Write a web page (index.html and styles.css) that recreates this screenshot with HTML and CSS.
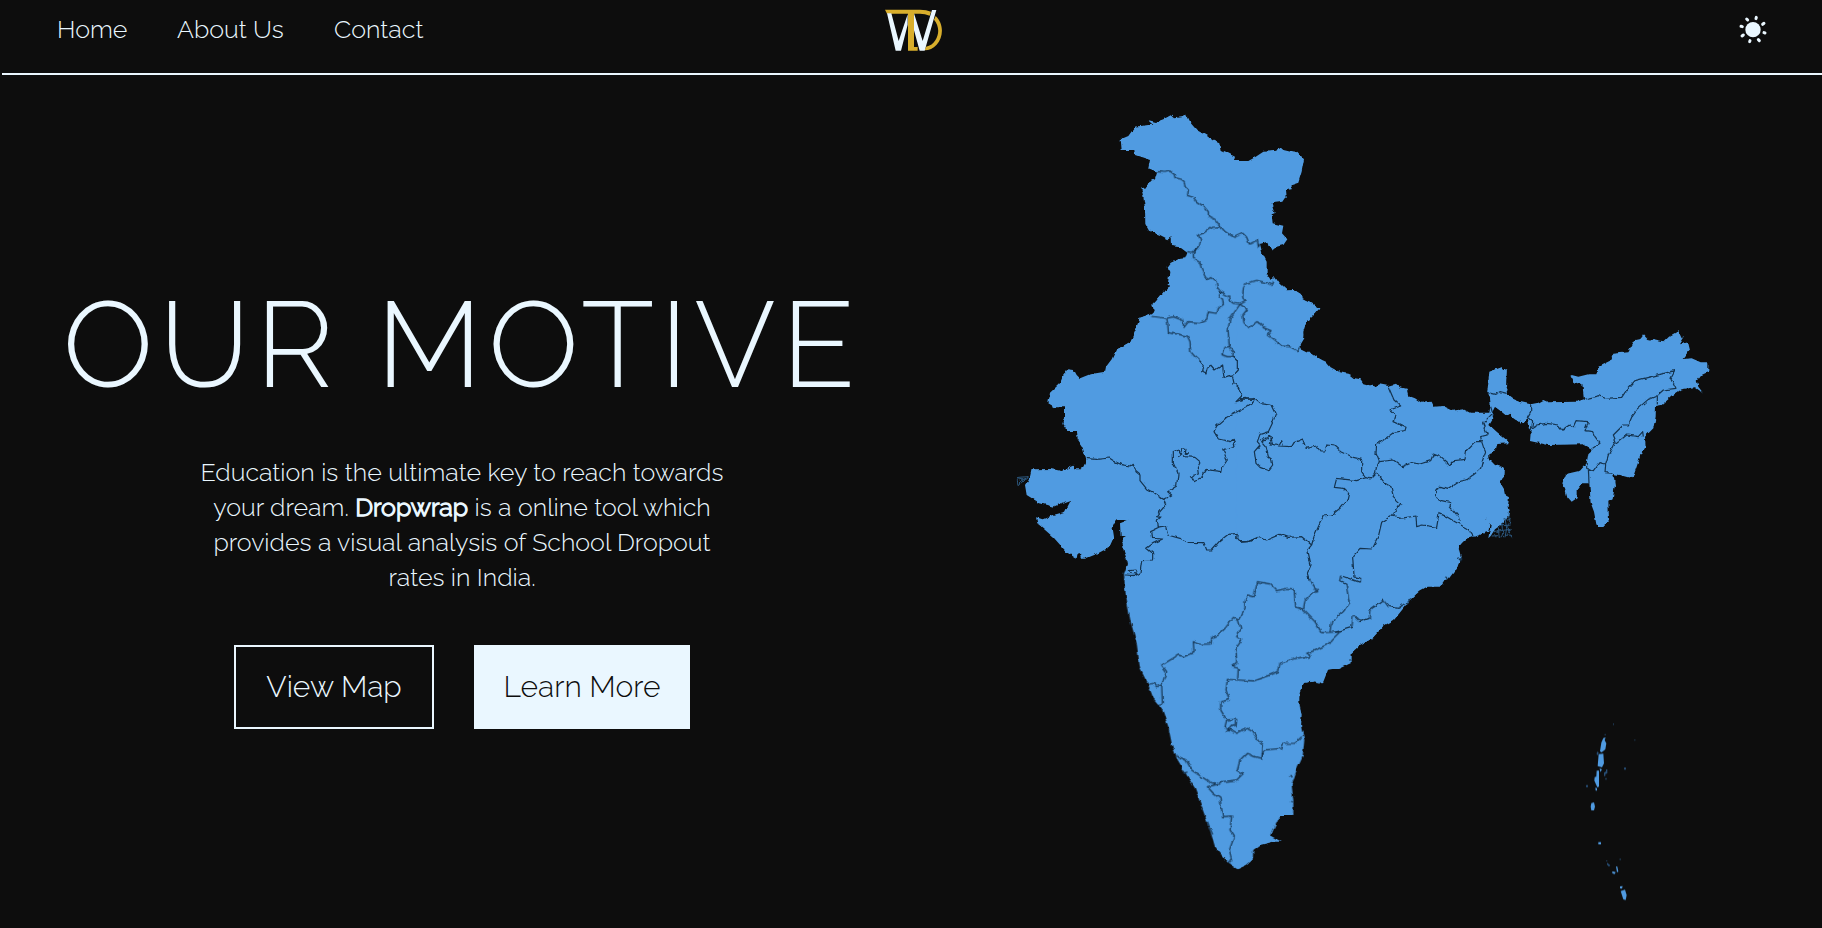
FILE: index.html
```html
<!DOCTYPE html>
<html lang="en">
<head>
<meta charset="utf-8">
<title>Dropwrap</title>
<link rel="stylesheet" href="styles.css">
</head>
<body>
<header class="header">
  <nav class="nav">
    <a class="nav-home">Home</a>
    <a class="nav-about">About Us</a>
    <a class="nav-contact">Contact</a>
  </nav>
  <svg class="logo" viewBox="75 28 174 128" aria-label="Dropwrap logo">
    <path d="M75 30H180Q200 30 213 36L209 48Q195 42 180 42H81Z" fill="#d8ae2c"/>
    <path d="M144 38H162V142H173V153H144Z" fill="#d8ae2c"/>
    <path d="M227 49C252 72 251 112 230 135C219 147 208 152 194 152L198 141C211 139 220 132 226 122C239 101 237 78 222 60Z" fill="#d8ae2c"/>
    <path d="M81 41H94L116 124L143 44V75L123 153H107Z" fill="#eaf7ff"/>
    <path d="M162 41L188 124L216 31H229L194 153H179L162 92Z" fill="#eaf7ff"/>
  </svg>
  <svg class="sun" viewBox="87 46 84 88" aria-label="Toggle theme">
    <circle cx="129" cy="90" r="23"/>
    <g stroke-width="9" stroke-linecap="round">
      <path d="M138 57l1-4M158 74l4-3M162 99l3 1M145 120l3 3M119 126l1-3M96 109l4-3M93 80l4 1M110 58l3 3"/>
    </g>
  </svg>
</header>
<main class="hero">
  <section class="intro">
    <h1 class="title">OUR MOTIVE</h1>
    <p class="text">
      <span class="line line-1">Education is the ultimate key to reach towards</span>
      <span class="line line-2">your dream. <b>Dropwrap</b> is a online tool which</span>
      <span class="line line-3">provides a visual analysis of School Dropout</span>
      <span class="line line-4">rates in India.</span>
    </p>
    <div class="actions">
      <a class="button button-outline">View Map</a>
      <a class="button button-solid">Learn More</a>
    </div>
  </section>
  <svg class="map" viewBox="1000 100 740 820" aria-label="Map of India">
    <defs>
      <filter id="coast" x="1000" y="100" width="740" height="820" filterUnits="userSpaceOnUse" color-interpolation-filters="sRGB">
        <feTurbulence type="fractalNoise" baseFrequency="0.16" numOctaves="2" seed="4" result="n"/>
        <feDisplacementMap in="SourceGraphic" in2="n" scale="4" xChannelSelector="R" yChannelSelector="G"/>
      </filter>
    </defs>
    <g filter="url(#coast)">
      <g class="land">
        <path transform="translate(1100 100) scale(.33333)" d="M38 780L48 750 90 726 105 700 115 675 120 654 157 640 162 630 157 615 185 585 205 562 213 557 203 555 208 520 203 500 212 488 235 478 256 475 262 458 240 442 213 438 212 412 205 418 180 405 147 392 136 372 135 325 130 290 124 265 140 262 145 248 165 238 172 215 145 205 150 180 125 172 105 165 103 150 65 150 62 118 85 108 105 80 145 75 160 75 143 60 168 66 190 58 212 46 222 55 245 52 258 46 266 62 290 90 320 107 340 122 358 130 362 150 385 160 405 170 402 183 445 183 465 172 490 155 532 152 540 141 550 150 585 158 592 155 612 178 605 215 595 248 575 255 575 268 558 270 560 290 550 305 515 310 524 340 515 343 518 370 550 377 546 400 562 418 550 435 530 440 518 450 505 440 502 425 480 432 487 460 500 485 500 520 512 540 525 528 540 550 560 568 580 567 605 585 608 598 635 612 658 626 640 642 618 670 608 690 610 708 600 725 598 745 625 758 632 758 665 780Z"/>
        <path transform="translate(1000 290) scale(.33333)" d="M495 0L460 45 462 68 420 83 408 115 390 157 348 180 335 208 318 230 315 245 270 253 240 265 230 255 222 240 205 238 188 260 180 280 150 308 145 340 165 352 192 352 192 385 187 402 202 423 228 423 230 448 245 470 255 505 255 520 250 530 240 538 222 538 222 527 185 543 155 537 95 538 90 560 75 585 80 615 120 640 160 650 185 640 213 630 195 665 160 675 128 688 108 682 112 700 160 742 200 787 230 806 232 790 240 790 243 806 255 806 290 792 328 772 342 740 338 715 350 690 385 690 360 700 362 738 378 738 366 745 372 785 385 815 382 845 372 870 800 880 800 0Z"/>
        <path transform="translate(1240 290) scale(.33333)" d="M-10 0L162 0 188 15 186 30 215 40 238 55 222 75 198 98 190 125 190 145 178 165 180 178 205 190 235 205 258 215 272 232 300 247 330 253 345 265 362 268 370 280 408 290 418 283 445 288 468 281 480 292 500 296 505 317 525 325 545 338 575 335 582 350 610 348 640 362 670 358 690 368 748 368 752 345 750 325 743 305 750 265 752 245 785 233 800 240 797 285 803 300 800 312 820 327 840 335 840 398 815 380 812 370 800 375 765 350 755 370 760 385 748 405 770 425 800 450 808 460 772 462 768 480 745 490 745 505 765 525 792 533 790 560 780 580 792 600 795 615 807 622 803 650 808 670 790 700 765 718 752 738 745 745 752 705 735 682 745 700 742 718 720 735 680 745 660 765 658 790 665 808 655 820 650 838 620 860 600 890 -10 890Z"/>
        <path transform="translate(1480 310) scale(.33333)" d="M30 250L22 245 28 185 65 172 80 182 78 230 82 250 90 265 118 275 152 283 175 278 190 270 205 277 290 275 312 268 307 222 280 217 275 195 295 200 325 193 352 193 355 170 390 152 400 128 445 124 465 90 482 86 492 73 505 87 550 97 570 77 595 63 605 85 615 78 600 103 625 97 630 118 608 147 635 145 662 157 685 157 685 185 665 195 650 215 655 230 670 250 645 232 605 238 580 255 545 285 528 288 527 320 520 355 495 380 497 410 480 440 470 470 458 505 430 497 400 492 405 525 398 568 385 575 387 630 370 648 350 648 342 605 332 578 328 520 305 520 290 540 290 565 275 575 262 560 255 535 247 520 258 492 300 482 320 460 325 430 338 418 310 403 205 405 150 393 152 370 142 322 132 338 100 320 85 308 80 318 48 292 35 290Z"/>
        <path transform="translate(1100 540) scale(.33333)" d="M65 0L85 75 72 100 75 150 92 245 110 310 120 385 145 435 160 475 185 505 205 560 215 610 230 655 260 705 285 745 305 800 330 870 345 920 385 970 412 988 440 975 458 960 460 930 480 915 520 905 545 905 513 888 520 870 540 828 580 828 580 780 575 735 590 690 608 650 613 600 603 560 602 510 595 480 600 450 615 428 650 424 658 432 680 390 710 385 710 0Z"/>
        <path transform="translate(1270 520) scale(.33333)" d="M0 0L660 0 655 35 610 50 580 60 567 80 575 110 560 145 535 178 480 195 450 212 420 240 372 300 340 318 310 352 270 375 245 398 245 428 205 447 175 447 160 485 140 490 135 482 105 488 88 520 88 560 95 580 92 630 0 630Z"/>
      </g>
      <g class="borders">
        <path transform="translate(1100 100) scale(.33333)" d="M172 215L195 217 210 213 222 222 225 233 245 238 253 245 255 260 265 270 263 285 280 292 290 305 312 320 325 335 325 348 345 358 362 380 375 395 402 412 428 400 440 412 448 432 472 420 475 440 480 432M362 380L335 382 312 398 295 405 302 420 298 440 275 457 262 455M298 440L280 460 280 475 300 488 305 510 320 538 332 530 348 542 352 562 362 575 385 588 388 600 400 610 420 613 435 605 428 590 430 565 438 550 470 541 500 548 515 556 518 545M362 575L358 588 368 598 370 614 352 625 348 640 325 636 320 658 298 668 265 665 252 682 247 660 220 650 200 655 157 649M200 655L203 670 205 698 230 702 262 708 270 725 272 755 285 770 297 780M420 613L390 655 384 690 388 740 372 742 366 764 382 770 398 770 400 755 390 740M420 613L442 628 428 645 432 668 448 684 470 665 485 672 490 683 513 692 502 705 520 718 545 738 570 740 592 752 598 742"/>
        <path transform="translate(1000 290) scale(.33333)" d="M255 505L290 508 328 504 345 515 362 523 390 528 400 520 408 545 420 555 420 572 440 597 465 610 490 628 515 615 503 605 530 588 534 550 520 520 520 485 535 480 545 492 535 500M545 485L545 476 558 478 556 488 565 488 550 495 555 500 585 502 600 515 592 530 595 552 580 556 570 565 585 572 605 562 620 538 640 542 665 545 668 530 682 510 668 480 705 468 700 448 690 455 655 447 642 425 650 408 680 382 740 350 765 332M490 628L497 645 480 665 470 680 482 682 472 690 475 714 497 710 503 735 540 745 565 757 612 758 620 780 635 780 660 752 685 733 712 730 710 745 720 757 745 755 780 740M475 714L452 725 455 745 488 747 460 760 440 775 458 790 458 810 425 812 420 850 405 857 375 855M388 842L405 840 410 852 395 850ZM597 210L610 225 605 245 618 252 622 235 632 225 645 240 668 225 672 265 697 257 712 240 712 210 700 198M697 257L702 280 715 292 725 318 708 335 735 325 765 330"/>
        <path transform="translate(1240 290) scale(.33333)" d="M0 325L20 328 45 325 60 338 95 343 108 370 97 400 85 425 60 433 52 455 60 465 43 485 48 520 60 532 85 542 98 525 95 508 85 500 78 470 65 455 80 448 90 435 98 445 88 460 115 468 155 470 162 458 188 447 198 475 230 468 240 483 255 483 262 465 285 468 305 485 340 502 365 508 365 545 378 563 390 567 405 552 410 530 418 515 408 490 410 465 460 428 495 422 498 412 462 395 468 375 450 360 482 348 462 330 445 290M60 450L95 438M90 440L98 463M118 466L125 452 130 466M418 515L460 510 488 530 515 518 540 522 572 512 580 492 600 500 628 525 640 512 675 508 680 480 705 455 725 455 730 470 737 487 728 510 722 535 708 548 680 570 655 575 620 598 602 592 587 600 587 620 605 632 632 638 630 650 655 680 658 692M725 455L722 440 742 435 728 400 758 370 752 350M743 308L765 313 780 305 800 310M410 548L435 580 453 590 460 620 482 640 458 675 425 697 415 740 397 777 360 775 338 800 342 860M458 675L480 685 528 678 530 710 548 705 590 712 597 670 620 680 645 695 685 718 700 740M378 563L350 572 290 565 283 592 310 595 326 610 322 628 300 655 275 675 250 678 235 710 222 740 215 765M0 755L25 755 55 742 80 750 120 733 145 742 185 740 215 765 203 780 213 825 202 850 208 870"/>
        <path transform="translate(1480 310) scale(.33333)" d="M152 283L152 305 142 322 158 335 152 370M155 355L170 345 200 340 235 345 248 360 268 345 280 350 288 332 325 335 315 362 338 365 345 380 360 400 338 415M312 268L360 257 375 265 425 262 440 240 465 212 585 182 573 205 588 235 550 240 530 258 505 268 470 298 458 315 445 345 430 345 400 375 410 400 440 375 475 380 488 365 490 380M405 395L385 435 377 462 375 488 402 490M377 462L360 458 340 485 320 475 320 458M325 475L327 520M532 258L532 285"/>
        <path transform="translate(1100 540) scale(.33333)" d="M145 433L160 430 170 440 185 435 200 395 185 375 235 345 250 350 282 338 280 305 300 313 333 312 335 293 355 285 375 265 400 232 415 240 435 205 435 185 442 165 462 170 472 125 510 132 530 152 560 145 582 147 587 200 610 210 615 180 635 160 653 155 640 135 628 120M610 210L645 245 665 278 690 277 720 275M415 240L422 265 410 290 425 300 408 325 410 370 398 380 415 385 413 415M720 275L695 300 690 310 640 333 620 340 632 345 628 355 610 350 590 355 540 370 535 395 510 405 460 423 382 418 378 450 388 480 362 485 362 510 380 540 410 538 408 560 395 555 378 575M380 540L375 560 410 580 440 565 458 575 475 600 490 615 485 655 465 650 440 640 420 660 412 690 430 700 410 720 365 725 350 735 320 720 275 690 258 660 230 648M485 655L495 630 545 625 550 610 585 610 605 590M185 435L187 490 172 495M345 735L322 740 340 760 360 775 368 830 395 828 390 870 403 890 388 930 395 960 385 970M322 845L338 884M568 710L578 710M570 783L580 788M252 700L262 696"/>
        <path transform="translate(1270 520) scale(.33333)" d="M180 337L185 305 220 275 238 250 228 190 212 182 215 168 245 178 270 187 272 175 250 170M195 337L245 322 250 285 270 305 298 295 300 270 320 255 340 240 355 260 385 265 420 240M565 118L575 116 572 123ZM526 170L535 176M236 420L245 420"/>
      </g>
      <path class="delta" transform="translate(1240 290) scale(.33333)" d="M803 668L810 690 803 710 815 742M795 685L800 715 795 742M785 700L788 728 783 742M775 712L778 744M765 720L768 742M755 738L815 735M760 725L812 718M780 708L812 705M790 690L812 685"/>
      <path class="delta" transform="translate(1000 290) scale(.33333)" d="M52 572L58 562 85 560 70 570 54 584ZM58 570L78 566 66 580"/>
    </g>
    <g class="islands" transform="translate(1560 700) scale(.33333)">
      <path d="M130 114L137 112 134 120 139 130 136 148 125 157 120 154 124 128ZM116 162L130 161 132 190 126 202 113 198ZM119 205L126 208 121 216ZM110 212L117 212 117 260 112 262 103 242 104 231 109 230ZM106 263L111 264 111 272 107 272ZM94 309L102 307 105 320 102 331 94 331 92 320ZM115 426h8v7h-8ZM157 514l10 2-3 6-7-2ZM168 499l4 1 3 15-4 2ZM180 559l8-1-2 8-6-1ZM182 573L195 569 200 585 197 600 190 598Z"/>
      <path class="dim" d="M111 155l5 2-2 8-4-1ZM138 208h4v12l-6 2v6h-4v-10l6-4ZM136 234h4v5h-4ZM192 203h6v6h-6ZM78 255h6v6h-6ZM141 488l10 8-4 4-6-6ZM134 102h3v4h-3ZM159 70h2v5h-2ZM223 119h3v3h-3ZM179 476h3v4h-3ZM138 481h4v2h-4Z"/>
    </g>
  </svg>
</main>
</body>
</html>
```
FILE: styles.css
```css
* { box-sizing: border-box; }
body {
  margin: 0;
  height: 928px;
  overflow: hidden;
  background: #0d0d0d;
  color: #eaf7ff;
  font-family: Raleway, Lato, sans-serif;
  font-weight: 300;
}
.header {
  display: grid;
  grid-template-columns: 1fr 58px 1fr;
  height: 75px;
  margin-left: 2px;
  border-bottom: 2px solid #eaf7ff;
}
.nav { display: flex; gap: 50px; padding: 14px 0 0 55px; font-size: 25px; line-height: 30px; white-space: nowrap; }
.nav a { display: block; }
.nav-home { width: 70px; }
.nav-about { width: 107px; }
.nav-contact { width: 90px; }
.logo { width: 58px; height: 42.7px; margin: 9.3px 0 0 2px; }
.sun { width: 28px; height: 29.3px; margin: 15.3px 55px 0 0; justify-self: end; fill: #eaf7ff; stroke: none; }
.sun g { stroke: #eaf7ff; }
.hero { display: flex; height: 853px; }
.intro { width: 924px; flex: none; display: flex; flex-direction: column; align-items: center; padding-top: 198px; }
.title { margin: 0; font-size: 120px; line-height: 144px; font-weight: 300; letter-spacing: 6px; white-space: nowrap; }
.text { margin: 38px 0 0; font-size: 25px; line-height: 35px; text-align: center; white-space: nowrap; }
.line { display: block; }
.line b { font-weight: 300; -webkit-text-stroke: 1.3px #eaf7ff; }
.actions { display: flex; gap: 40px; margin-top: 50px; }
.button { display: flex; align-items: center; justify-content: center; height: 84px; padding-bottom: 1px; font-size: 30px; border: 2px solid #eaf7ff; white-space: nowrap; }
.button-outline { width: 200px; }
.button-solid { width: 216px; background: #eaf7ff; color: #0d0d0d; }
.map { width: 740px; height: 820px; margin: 25px 0 0 76px; flex: none; }
.land { fill: #509be1; }
.borders { fill: none; stroke: #14334f; stroke-width: 3.6; stroke-linejoin: round; }
.delta { fill: none; stroke: #2c587f; stroke-width: 3; }
.islands { fill: #509be1; }
.dim { fill: #285079; }
```
